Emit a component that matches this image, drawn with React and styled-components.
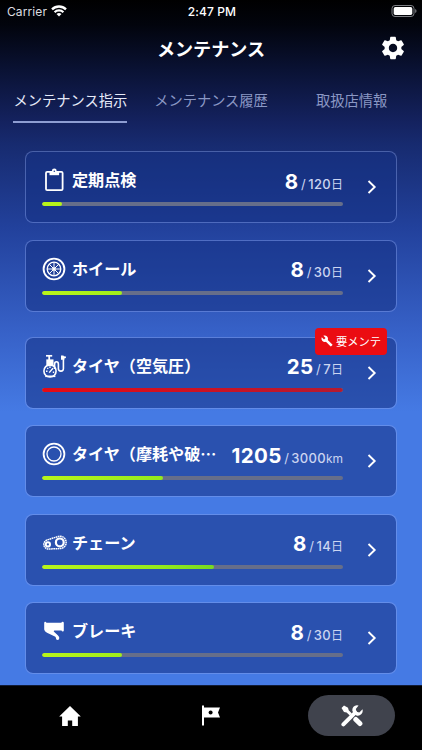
import { useState } from 'react';
import styled, { createGlobalStyle, css } from 'styled-components';
import { MdSettings, MdBuild } from 'react-icons/md';

const GlobalStyle = createGlobalStyle`
    * {
        box-sizing: border-box;
    }

    body {
        margin: 0;
        background: #000;
        font-family: Inter, 'Noto Sans CJK JP', sans-serif;
        color: #fff;
    }

    button {
        border: 0;
        padding: 0;
        background: none;
        color: inherit;
        font: inherit;
    }

    svg {
        display: block;
        flex-shrink: 0;
    }
`;

const Screen = styled.div`
    display: flex;
    flex-direction: column;
    width: 422px;
    height: 750px;
    overflow: hidden;
    background: linear-gradient(
        180deg,
        #000 0,
        #02040d 25px,
        #0a1234 70px,
        #14225f 122px,
        #172b70 145px,
        #22419c 228px,
        #3660c6 328px,
        #457ae4 412px,
        #457ae4 100%
    );
`;

const StatusBar = styled.div`
    display: grid;
    grid-template-columns: 1fr auto 1fr;
    align-items: center;
    height: 22px;
    padding: 0 5px 0 7px;
    font-size: 12px;
    letter-spacing: 0.1px;
`;

const Carrier = styled.div`
    display: flex;
    align-items: center;
    gap: 4px;
    color: #dcdde0;
`;

const Clock = styled.div`
    font-weight: 500;
    letter-spacing: 0.1px;
`;

const Battery = styled.div`
    justify-self: end;
`;

const Header = styled.header`
    display: grid;
    grid-template-columns: 1fr auto 1fr;
    align-items: center;
    height: 52px;
    padding: 0 15px;

    h1 {
        grid-column: 2;
        margin: 0;
        padding-top: 2px;
        font-size: 18.1px;
        font-weight: 700;
        line-height: 26px;
    }

    button {
        justify-self: end;
    }
`;

const Tabs = styled.nav`
    display: grid;
    grid-template-columns: repeat(3, 1fr);
    justify-items: center;
    height: 77px;
    padding-top: 16px;
`;

const Tab = styled.button`
    height: 33px;
    padding-bottom: 10px;
    border-bottom: 2px solid transparent;
    font-size: 14.25px;
    line-height: 21px;
    color: #8a97c4;

    ${({ $active }) => $active && css`
        border-color: #8e9dd2;
        color: #e6eaf8;
    `}
`;

const List = styled.main`
    display: flex;
    flex-direction: column;
    gap: 16.5px;
    height: 534px;
    padding: 0 25px;
`;

const Card = styled.section`
    position: relative;
    display: flex;
    align-items: center;
    flex-shrink: 0;
    height: 72px;
    margin-top: ${({ $alert }) => ($alert ? '8.5px' : 0)};
    padding: 0 16px;
    border: 1px solid rgba(140, 168, 240, 0.42);
    border-radius: 8px;
    background: rgba(22, 50, 134, 0.56);
    background-clip: padding-box;
`;

const CardBody = styled.div`
    width: 301px;
    padding-bottom: 2px;
`;

const CardTop = styled.div`
    display: flex;
    align-items: center;
    height: 28px;
`;

const IconBox = styled.div`
    display: flex;
    align-items: center;
    justify-content: center;
    width: 24px;
    height: 24px;
    margin-right: 6px;
`;

const Name = styled.h2`
    margin: 0;
    padding-bottom: 2px;
    font-family: 'Noto Sans CJK JP', sans-serif;
    font-size: 16.1px;
    font-weight: 700;
    line-height: 24px;
    white-space: nowrap;
`;

const Count = styled.div`
    display: flex;
    align-items: baseline;
    margin-left: auto;
    padding-top: 6px;
    font-size: 13px;
    line-height: 26px;
    color: #ccd5f1;
    white-space: nowrap;

    strong {
        margin-right: 2.5px;
        font-size: 20.5px;
        font-weight: 700;
        letter-spacing: 0.4px;
        color: #fff;
    }

    span {
        margin-left: 2.5px;
        font-weight: 500;
        letter-spacing: 0.3px;
    }

    small {
        font-size: 12px;
    }
`;

const Track = styled.div`
    height: 4px;
    margin-top: 8px;
    border-radius: 2px;
    background: #666e8a;
    overflow: hidden;
`;

const Fill = styled.div`
    height: 100%;
    border-radius: 2px;
    background: ${({ $alert }) => ($alert
        ? 'linear-gradient(90deg, #e60a14, #b51a30)'
        : 'linear-gradient(90deg, #b9f51a, #93ea1c 120px, #76d921 172px)')};
`;

const Chevron = styled.svg`
    margin-left: 24px;
`;

const Badge = styled.div`
    position: absolute;
    top: -10px;
    right: 9px;
    display: flex;
    align-items: center;
    justify-content: center;
    gap: 3px;
    width: 72px;
    height: 27px;
    padding-top: 2px;
    border-radius: 4px;
    background: #eb0c12;
    font-size: 11.3px;
    line-height: 18px;

    svg {
        margin-bottom: 3px;
    }
`;

const BottomNav = styled.nav`
    display: grid;
    grid-template-columns: repeat(3, 1fr);
    place-items: center;
    height: 65px;
    padding-bottom: 5px;
    border-top: 1px solid #101b36;
    background: #000;
`;

const NavItem = styled.button`
    display: flex;
    align-items: center;
    justify-content: center;
    width: 87px;
    height: 41px;
    border-radius: 21px;
    background: ${({ $active }) => ($active ? '#40434d' : 'transparent')};
`;

function ClipboardIcon() {
    return (
        <svg width="24" height="24" viewBox="0 0 24 24" fill="none" stroke="#fff" strokeWidth="1.8">
            <rect x="4" y="3.8" width="16.6" height="18.4" rx="1.2" />
            <path d="M7.5 3.2h9.6v4H7.5z" fill="#fff" stroke="none" />
            <circle cx="12.3" cy="2.9" r="2.4" fill="#fff" stroke="none" />
            <circle cx="12.3" cy="3.3" r="0.8" fill="#203c8c" stroke="none" />
        </svg>
    );
}

function WheelIcon() {
    return (
        <svg width="24" height="24" viewBox="0 0 24 24" fill="none" stroke="#fff">
            <circle cx="12" cy="12" r="10.4" strokeWidth="1.9" />
            <circle cx="12" cy="12" r="6.8" strokeWidth="1.3" />
            <path d="M12 5v14M5 12h14M7.1 7.1l9.8 9.8M16.9 7.1l-9.8 9.8" strokeWidth="1" />
            <circle cx="12" cy="12" r="1.8" fill="#fff" stroke="none" />
        </svg>
    );
}

function PumpIcon() {
    return (
        <svg width="24" height="24" viewBox="0 0 24 24" fill="none" stroke="#fff" strokeLinejoin="round">
            <path d="M4 1.8h6.2" strokeWidth="1.7" />
            <path d="M7.2 2v4" strokeWidth="1.8" />
            <path d="M4.3 5.4h7.2v6.8H4.3z" fill="#fff" stroke="none" />
            <path d="M3.2 22.3h10.2" strokeWidth="1.6" />
            <circle cx="8" cy="16.9" r="6.1" strokeWidth="1.6" />
            <path d="M7.2 18.6l3.8-4.4M4 17.2h1.5M5.3 13.9l.9.9M8 12.6V14M10.8 18.2h1.4" strokeWidth="1.4" />
            <path d="M12.6 15V10.2q0-2.4 1.9-2.4t1.9 2.4v4.6q0 2.3 2.5 2.3t2.5-2.3V4.5" strokeWidth="1.6" />
            <path d="M19 1.4v4.4h3.3V4.4l1.6-.3V2.5l-2-.3-.5-.8z" fill="#fff" stroke="none" />
        </svg>
    );
}

function TireIcon() {
    return (
        <svg width="24" height="24" viewBox="0 0 24 24" fill="none" stroke="#fff">
            <circle cx="12" cy="12" r="10.4" strokeWidth="1.8" />
            <circle cx="12" cy="12" r="7" strokeWidth="1.3" />
        </svg>
    );
}

function ChainIcon() {
    return (
        <svg width="25" height="24" viewBox="0 0 25 24" fill="none" stroke="#fff">
            <path
                d="M5.4 8.9L16.4 5.4A6.2 6.2 0 1 1 18 17.6L6 18A4.4 4.6 0 0 1 5.4 8.9z"
                strokeWidth="1.5"
                strokeDasharray="1.7 0.5"
            />
            <circle cx="5.9" cy="13.4" r="2.1" strokeWidth="2" />
            <circle cx="17.8" cy="11.4" r="3.9" strokeWidth="2.2" />
        </svg>
    );
}

function BrakeIcon() {
    return (
        <svg width="24" height="24" viewBox="0 0 24 24" fill="#fff">
            <path d="M3.2 2.8q1 0 1.2 1h15q.2-1 1.3-1t1.1 1.1v7.6q0 1.1-1 1.1t-1.3-1.1H12.4q-1.2.2-.4 1.3l3.8 3.4q1.6 1.3 1.5 2.9 0 1.9-1.7 1.9t-1.7-2q-.1-.9-1-1.4L5 13.8q-2.6-1.5-2.8-3.4V3.9q0-1.1 1-1.1z" />
        </svg>
    );
}

function HomeIcon() {
    return (
        <svg width="22" height="20" viewBox="0 0 22 20" fill="#fff">
            <path d="M11 0l10.8 10.6h-2.9V20h-5.7v-5.6H8.8V20H3.1v-9.4H.2z" />
        </svg>
    );
}

function FlagIcon() {
    return (
        <svg width="20" height="22" viewBox="0 0 20 22">
            <path d="M1 .6h2v2h16l-2 4.9 2 5.1H3v8H1z" fill="#fff" />
            <circle cx="9.6" cy="7.4" r="2" fill="#000" />
        </svg>
    );
}

function ToolsIcon() {
    return (
        <svg width="22" height="22" viewBox="0 0 22 22" fill="none" stroke="#fff">
            <path d="M.5 3L3 .5l4 2.2.7 2.6 3.2 3.2-2.1 2.1-3.2-3.2L3 6.9z" fill="#fff" stroke="none" />
            <path d="M14.8 14.4l4.1 4.1" strokeWidth="5" strokeLinecap="round" />
            <path d="M2.4 19.4L14.2 7.6" strokeWidth="4" strokeLinecap="round" />
            <path
                d="M17.6 0.5q-3.2-.9-5.1 1.3-1.8 2.2-.9 4.8l3.8 3.8q2.8.8 4.8-1.1 2.1-2 1.3-5l-3.2 3.1-2.7-.7-.8-2.7z"
                fill="#fff"
                stroke="none"
            />
        </svg>
    );
}

function WifiIcon() {
    return (
        <svg width="16" height="12" viewBox="0 0 16 12" fill="none" stroke="#fff" strokeWidth="2.3">
            <path d="M1 4.3a10.1 10.1 0 0 1 14 0" />
            <path d="M3.6 7.2a6.3 6.3 0 0 1 8.8 0" />
            <path d="M8 11.6L5.5 9.1a3.6 3.6 0 0 1 5 0z" fill="#fff" stroke="none" />
        </svg>
    );
}

const tabs = ['メンテナンス指示', 'メンテナンス履歴', '取扱店情報'];

const items = [
    { name: '定期点検', icon: ClipboardIcon, value: 8, limit: 120, unit: '日', progress: 6.7 },
    { name: 'ホイール', icon: WheelIcon, value: 8, limit: 30, unit: '日', progress: 26.7 },
    { name: 'タイヤ（空気圧）', icon: PumpIcon, value: 25, limit: 7, unit: '日', progress: 100, alert: true },
    { name: 'タイヤ（摩耗や破…', icon: TireIcon, value: 1205, limit: 3000, unit: 'km', progress: 40.2 },
    { name: 'チェーン', icon: ChainIcon, value: 8, limit: 14, unit: '日', progress: 57.1 },
    { name: 'ブレーキ', icon: BrakeIcon, value: 8, limit: 30, unit: '日', progress: 26.7 },
];

function MaintenanceCard({ item }) {
    const Icon = item.icon;

    return (
        <Card $alert={item.alert}>
            <CardBody>
                <CardTop>
                    <IconBox><Icon /></IconBox>
                    <Name>{item.name}</Name>
                    <Count>
                        <strong>{item.value}</strong>
                        /
                        <span>{item.limit}</span>
                        <small>{item.unit}</small>
                    </Count>
                </CardTop>
                <Track>
                    <Fill $alert={item.alert} style={{ width: `${item.progress}%` }} />
                </Track>
            </CardBody>
            <Chevron width="10" height="16" viewBox="0 0 10 16" fill="none" stroke="#fff" strokeWidth="1.9">
                <path d="M1.5 2l6.2 6-6.2 6" />
            </Chevron>
            {item.alert && (
                <Badge>
                    <MdBuild size={12} />
                    要メンテ
                </Badge>
            )}
        </Card>
    );
}

function App() {
    const [tab, setTab] = useState(0);

    return (
        <Screen>
            <GlobalStyle />
            <StatusBar>
                <Carrier>
                    Carrier
                    <WifiIcon />
                </Carrier>
                <Clock>2:47 PM</Clock>
                <Battery>
                    <svg width="26" height="12" viewBox="0 0 26 12">
                        <rect x="1" y="0.5" width="22" height="11" rx="3" fill="none" stroke="#7d7f84" />
                        <rect x="2.7" y="2.1" width="18.6" height="7.8" rx="1.6" fill="#fff" />
                        <path d="M24.2 4v4q1.3-.6 1.3-2t-1.3-2z" fill="#7d7f84" />
                    </svg>
                </Battery>
            </StatusBar>
            <Header>
                <h1>メンテナンス</h1>
                <button aria-label="設定"><MdSettings size={28} /></button>
            </Header>
            <Tabs>
                {tabs.map((label, i) => (
                    <Tab key={label} $active={i === tab} onClick={() => setTab(i)}>{label}</Tab>
                ))}
            </Tabs>
            <List>
                {items.map(item => <MaintenanceCard key={item.name} item={item} />)}
            </List>
            <BottomNav>
                <NavItem><HomeIcon /></NavItem>
                <NavItem><FlagIcon /></NavItem>
                <NavItem $active><ToolsIcon /></NavItem>
            </BottomNav>
        </Screen>
    );
}

export default App;
